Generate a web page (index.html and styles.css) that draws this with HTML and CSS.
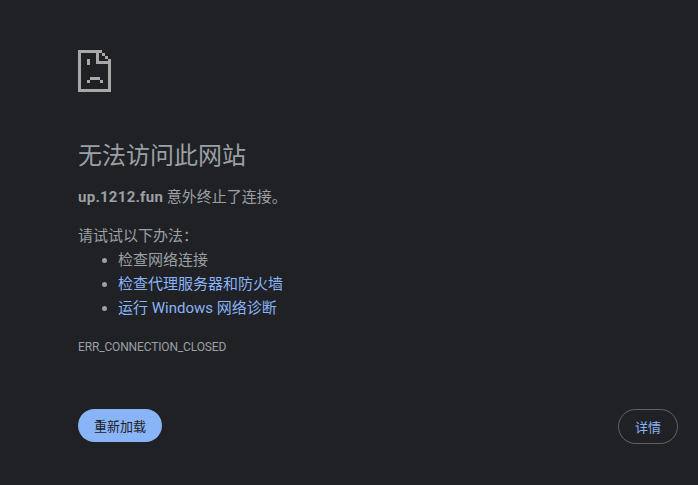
FILE: index.html
```html
<!DOCTYPE html>
<html lang="zh-CN">

<head>
    <meta charset="UTF-8">
    <meta name="viewport" content="width=device-width, initial-scale=1.0">
    <title>up.1212.fun</title>
    <link rel="stylesheet" href="styles.css">
</head>

<body>
    <div class="main-content">
        <svg class="icon-sad-page" width="33" height="42" viewBox="0 0 33 42" shape-rendering="crispEdges">
            <!-- page outline -->
            <path d="M0 0h24v3h-21v36h27v-25h3v28h-33z" />
            <!-- folded corner -->
            <path d="M18 0h3v11h12v3h-15z" />
            <path d="M24 3h3v3h-3zM27 6h3v3h-3zM30 9h3v3h-3z" />
            <!-- eye -->
            <path d="M9 9h3v6h-3z" />
            <!-- mouth -->
            <path d="M12 27h10v3h-10zM9 30h3v3h-3zM22 30h3v3h-3z" />
        </svg>

        <h1 class="error-title">无法访问此网站</h1>
        <p class="error-desc"><strong>up.1212.fun</strong> 意外终止了连接。</p>
        <p class="try-title">请试试以下办法：</p>
        <ul class="try-list">
            <li>检查网络连接</li>
            <li><a href="#">检查代理服务器和防火墙</a></li>
            <li><a href="#">运行 Windows 网络诊断</a></li>
        </ul>
        <div class="error-code">ERR_CONNECTION_CLOSED</div>
    </div>

    <div class="button-row">
        <button class="reload-button">重新加载</button>
        <button class="details-button">详情</button>
    </div>
</body>

</html>
```

FILE: styles.css
```css
* {
    margin: 0;
    padding: 0;
    box-sizing: border-box;
}

html,
body {
    height: 100%;
}

body {
    background: #202124;
    color: #9aa0a6;
    font-family: Roboto, "Noto Sans CJK SC", sans-serif;
    font-size: 15px;
    padding: 50px 20px 41px 78px;
    display: flex;
    flex-direction: column;
    justify-content: space-between;
}

a {
    color: #8ab4f8;
    text-decoration: none;
}

strong {
    letter-spacing: 0.27px;
}

.icon-sad-page {
    display: block;
    fill: #a8a8a8;
}

.error-title {
    font-size: 24px;
    font-weight: 400;
    line-height: 30px;
    margin-top: 49px;
}

.error-desc {
    line-height: 24px;
    margin-top: 14px;
}

.try-title {
    line-height: 24px;
    margin-top: 15px;
}

.try-list {
    padding-left: 40px;
}

.try-list li {
    line-height: 24px;
}

.error-code {
    font-size: 12px;
    letter-spacing: -0.15px;
    line-height: 16px;
    margin-top: 19px;
}

.button-row {
    display: flex;
    justify-content: space-between;
    align-items: flex-start;
}

.reload-button,
.details-button {
    font-family: Roboto, "Noto Sans CJK SC", sans-serif;
    font-size: 13px;
    cursor: pointer;
}

.reload-button {
    width: 84px;
    height: 33px;
    background: #8ab4f8;
    color: #202124;
    border: none;
    border-radius: 17px;
}

.details-button {
    width: 60px;
    height: 35px;
    background: transparent;
    color: #8ab4f8;
    border: 1px solid #5f6368;
    border-radius: 18px;
}
```
